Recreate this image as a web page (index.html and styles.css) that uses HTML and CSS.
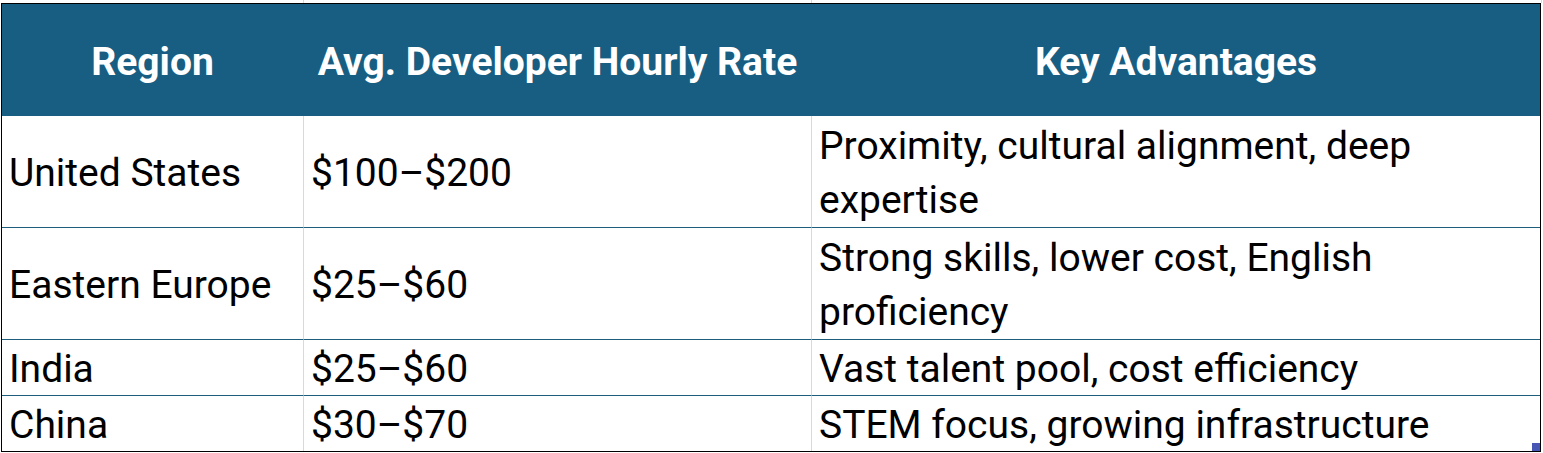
FILE: index.html
```html
<!DOCTYPE html>
<html lang="en">
  <head>
    <meta charset="UTF-8" />
    <title>Developer Rates by Region</title>
    <link rel="stylesheet" href="styles.css">
  </head>
  <body>
    <!-- grille de la feuille au-dessus du tableau -->
    <div class="sheet-top">
      <div class="grid-col col-region"></div>
      <div class="grid-col col-rate"></div>
      <div class="grid-col col-adv"></div>
    </div>
    <div class="sheet">
      <table class="rates">
        <colgroup>
          <col class="w-region">
          <col class="w-rate">
          <col class="w-adv">
        </colgroup>
        <thead>
          <tr>
            <th>Region</th>
            <th>Avg. Developer Hourly Rate</th>
            <th>Key Advantages</th>
          </tr>
        </thead>
        <tbody>
          <tr class="tall">
            <td>United States</td>
            <td>$100–$200</td>
            <td>Proximity, cultural alignment, deep expertise</td>
          </tr>
          <tr class="tall">
            <td>Eastern Europe</td>
            <td>$25–$60</td>
            <td>Strong skills, lower cost, English proficiency</td>
          </tr>
          <tr>
            <td>India</td>
            <td>$25–$60</td>
            <td>Vast talent pool, cost efficiency</td>
          </tr>
          <tr class="last">
            <td>China</td>
            <td>$30–$70</td>
            <td>STEM focus, growing infrastructure</td>
          </tr>
        </tbody>
      </table>
      <!-- poignée de redimensionnement du tableau -->
      <span class="resize-handle"></span>
    </div>
  </body>
</html>
```

FILE: styles.css
```css
body {
  margin: 0;
  background-color: #ffffff;
  font-family: Roboto, "Liberation Sans", Arial, sans-serif;
  color: #000000;
}

/* Lignes de grille de la feuille */
.sheet-top {
  display: flex;
  height: 3px;
}

.grid-col {
  border-right: 1px solid #d9d9d9;
}

.col-region {
  width: 303px;
}

.col-rate {
  width: 507px;
}

.col-adv {
  width: 729px;
}

.sheet {
  position: relative;
  padding-left: 1px;
  width: 1540px;
}

/* Tableau principal */
.rates {
  border-collapse: separate;
  border-spacing: 0;
  border: 1px solid #000000;
  table-layout: fixed;
  width: 1540px;
}

.w-region {
  width: 302px;
}

.w-rate {
  width: 508px;
}

.w-adv {
  width: 728px;
}

.rates th {
  background-color: #175e82;
  color: #ffffff;
  font-weight: 700;
  font-size: 39px;
  height: 112px;
  padding: 4px 0 0 0;
  text-align: center;
  vertical-align: middle;
  border-right: 1px solid transparent;
  box-sizing: border-box;
}

.rates td {
  font-size: 39px;
  line-height: 51px;
  height: 56px;
  padding: 4px 14px 0 7px;
  text-align: left;
  vertical-align: middle;
  border-right: 1px solid #d9d9d9;
  border-bottom: 1px solid #1f5d7c;
  box-sizing: border-box;
}

.rates th:last-child,
.rates td:last-child {
  border-right: none;
}

.rates tr.tall td {
  height: 112px;
  line-height: 54px;
  padding-top: 3px;
}

.rates tr.last td {
  height: 55px;
  border-bottom: none;
}

.resize-handle {
  position: absolute;
  right: 1px;
  bottom: 1px;
  width: 8px;
  height: 8px;
  background-color: #4757b3;
}
```
